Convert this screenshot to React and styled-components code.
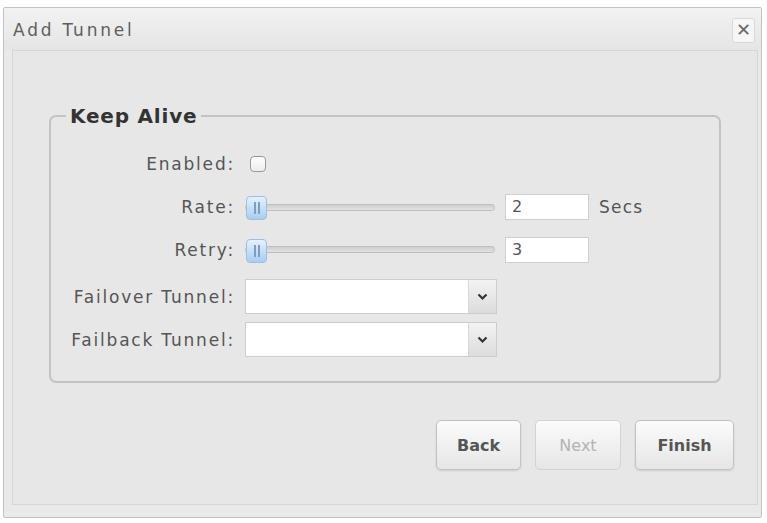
import React from "react";
import styled, { createGlobalStyle } from "styled-components";

const GlobalStyle = createGlobalStyle`
  html, body { margin: 0; padding: 0; background: #ffffff; }
  body { font-family: "DejaVu Sans", "Liberation Sans", sans-serif; }
  * { box-sizing: border-box; }
`;

const Dialog = styled.div`
  margin: 7px 5px 0 3px;
  width: 759px;
  height: 511px;
  border: 1px solid #c2c2c2;
  border-radius: 2px;
  background: #e9e9e9;
  display: flex;
  flex-direction: column;
`;

const TitleBar = styled.div`
  height: 42px;
  flex: none;
  display: flex;
  align-items: center;
  justify-content: space-between;
  padding: 2px 6px 0 9px;
  background: linear-gradient(#f2f2f2, #e5e5e5);
`;

const Title = styled.div`
  font-size: 17px;
  letter-spacing: 2.8px;
  color: #5e5e5e;
`;

const CloseButton = styled.button`
  width: 23px;
  height: 25px;
  padding: 0;
  border: 1px solid #d9d9d9;
  border-radius: 3px;
  background: #f6f6f6;
  color: #6a6a6a;
  font-family: "DejaVu Sans", sans-serif;
  font-size: 18px;
  line-height: 20px;
  display: flex;
  align-items: center;
  justify-content: center;
`;

const Panel = styled.div`
  flex: 1;
  margin: 0 3px 12px 8px;
  border: 1px solid #d6d6d6;
  background: #e7e7e7;
  padding: 53px 23px 0 36px;
  display: flex;
  flex-direction: column;
`;

const Fieldset = styled.fieldset`
  margin: 0 13px 0 0;
  padding: 0 0 24px 0;
  border: 2px solid #c3c3c3;
  border-radius: 7px;
`;

const Legend = styled.legend`
  margin-left: 15px;
  padding: 0 4px;
  font-size: 20px;
  font-weight: bold;
  letter-spacing: 0.8px;
  color: #333;
  line-height: 24px;
`;

const Row = styled.div`
  display: grid;
  grid-template-columns: 184px auto;
  column-gap: 10px;
  align-items: center;
  height: ${(p) => p.$h}px;
  margin-top: ${(p) => p.$mt}px;
`;

const Label = styled.label`
  text-align: right;
  font-size: 17px;
  letter-spacing: 1.8px;
  color: #555;
  white-space: nowrap;
`;

const Controls = styled.div`
  display: flex;
  align-items: center;
`;

const Checkbox = styled.span`
  display: block;
  width: 16px;
  height: 16px;
  margin-left: 5px;
  border: 1px solid #9a9a9a;
  border-radius: 4px;
  background: linear-gradient(#ffffff, #ededed);
`;

const Slider = styled.div`
  position: relative;
  width: 250px;
  height: 26px;
  display: flex;
  align-items: center;
`;

const Track = styled.div`
  width: 100%;
  height: 7px;
  border: 1px solid #bdbdbd;
  border-radius: 4px;
  background: linear-gradient(#cfcfcf, #e2e2e2);
`;

const Handle = styled.div`
  position: absolute;
  left: 1px;
  top: 2px;
  width: 21px;
  height: 24px;
  border: 1px solid #9fbfdf;
  border-radius: 4px;
  background: linear-gradient(#e4f1fd, #a9cdf1);
  display: flex;
  align-items: center;
  justify-content: center;
  gap: 2px;
`;

const Grip = styled.span`
  width: 2px;
  height: 12px;
  background: #7c9ec2;
`;

const NumberInput = styled.div`
  margin-left: 10px;
  width: 84px;
  height: 26px;
  border: 1px solid #cfcfcf;
  background: #ffffff;
  padding-left: 6px;
  font-size: 16px;
  line-height: 24px;
  color: #555;
`;

const Unit = styled.span`
  margin-left: 10px;
  font-size: 17px;
  letter-spacing: 1.2px;
  color: #555;
`;

const Select = styled.div`
  width: 252px;
  height: 35px;
  border: 1px solid #cdcdcd;
  background: #ffffff;
  display: flex;
  justify-content: flex-end;
`;

const SelectButton = styled.div`
  width: 28px;
  border-left: 1px solid #d8d8d8;
  background: linear-gradient(#f3f3f3, #dcdcdc);
  display: flex;
  align-items: center;
  justify-content: center;
`;

const Buttons = styled.div`
  display: flex;
  justify-content: flex-end;
  gap: 14px;
  margin-top: 37px;
`;

const Button = styled.button`
  width: ${(p) => p.$w}px;
  height: 50px;
  border: 1px solid ${(p) => (p.$disabled ? "#d3d3d3" : "#c2c2c2")};
  border-radius: 5px;
  background: linear-gradient(#fbfbfb, #e6e6e6);
  box-shadow: ${(p) => (p.$disabled ? "none" : "0 1px 2px rgba(0,0,0,0.12)")};
  font-family: "DejaVu Sans", sans-serif;
  font-size: 16px;
  font-weight: ${(p) => (p.$disabled ? "normal" : "bold")};
  color: ${(p) => (p.$disabled ? "#b3b3b3" : "#555")};
`;

const Chevron = () => (
  <svg width="11" height="8" viewBox="0 0 11 8">
    <path d="M1.5 1.5 L5.5 5.5 L9.5 1.5" fill="none" stroke="#333" strokeWidth="2.2" />
  </svg>
);

const SliderControl = () => (
  <Slider>
    <Track />
    <Handle>
      <Grip />
      <Grip />
    </Handle>
  </Slider>
);

export default function App() {
  return (
    <>
      <GlobalStyle />
      <Dialog>
        <TitleBar>
          <Title>Add Tunnel</Title>
          <CloseButton aria-label="Close">✕</CloseButton>
        </TitleBar>
        <Panel>
          <Fieldset>
            <Legend>Keep Alive</Legend>
            <Row $h={26} $mt={23}>
              <Label>Enabled:</Label>
              <Controls>
                <Checkbox />
              </Controls>
            </Row>
            <Row $h={26} $mt={17}>
              <Label>Rate:</Label>
              <Controls>
                <SliderControl />
                <NumberInput>2</NumberInput>
                <Unit>Secs</Unit>
              </Controls>
            </Row>
            <Row $h={27} $mt={16}>
              <Label>Retry:</Label>
              <Controls>
                <SliderControl />
                <NumberInput>3</NumberInput>
              </Controls>
            </Row>
            <Row $h={35} $mt={16}>
              <Label>Failover Tunnel:</Label>
              <Controls>
                <Select>
                  <SelectButton>
                    <Chevron />
                  </SelectButton>
                </Select>
              </Controls>
            </Row>
            <Row $h={35} $mt={8}>
              <Label>Failback Tunnel:</Label>
              <Controls>
                <Select>
                  <SelectButton>
                    <Chevron />
                  </SelectButton>
                </Select>
              </Controls>
            </Row>
          </Fieldset>
          <Buttons>
            <Button $w={85}>Back</Button>
            <Button $w={86} $disabled>Next</Button>
            <Button $w={99}>Finish</Button>
          </Buttons>
        </Panel>
      </Dialog>
    </>
  );
}
